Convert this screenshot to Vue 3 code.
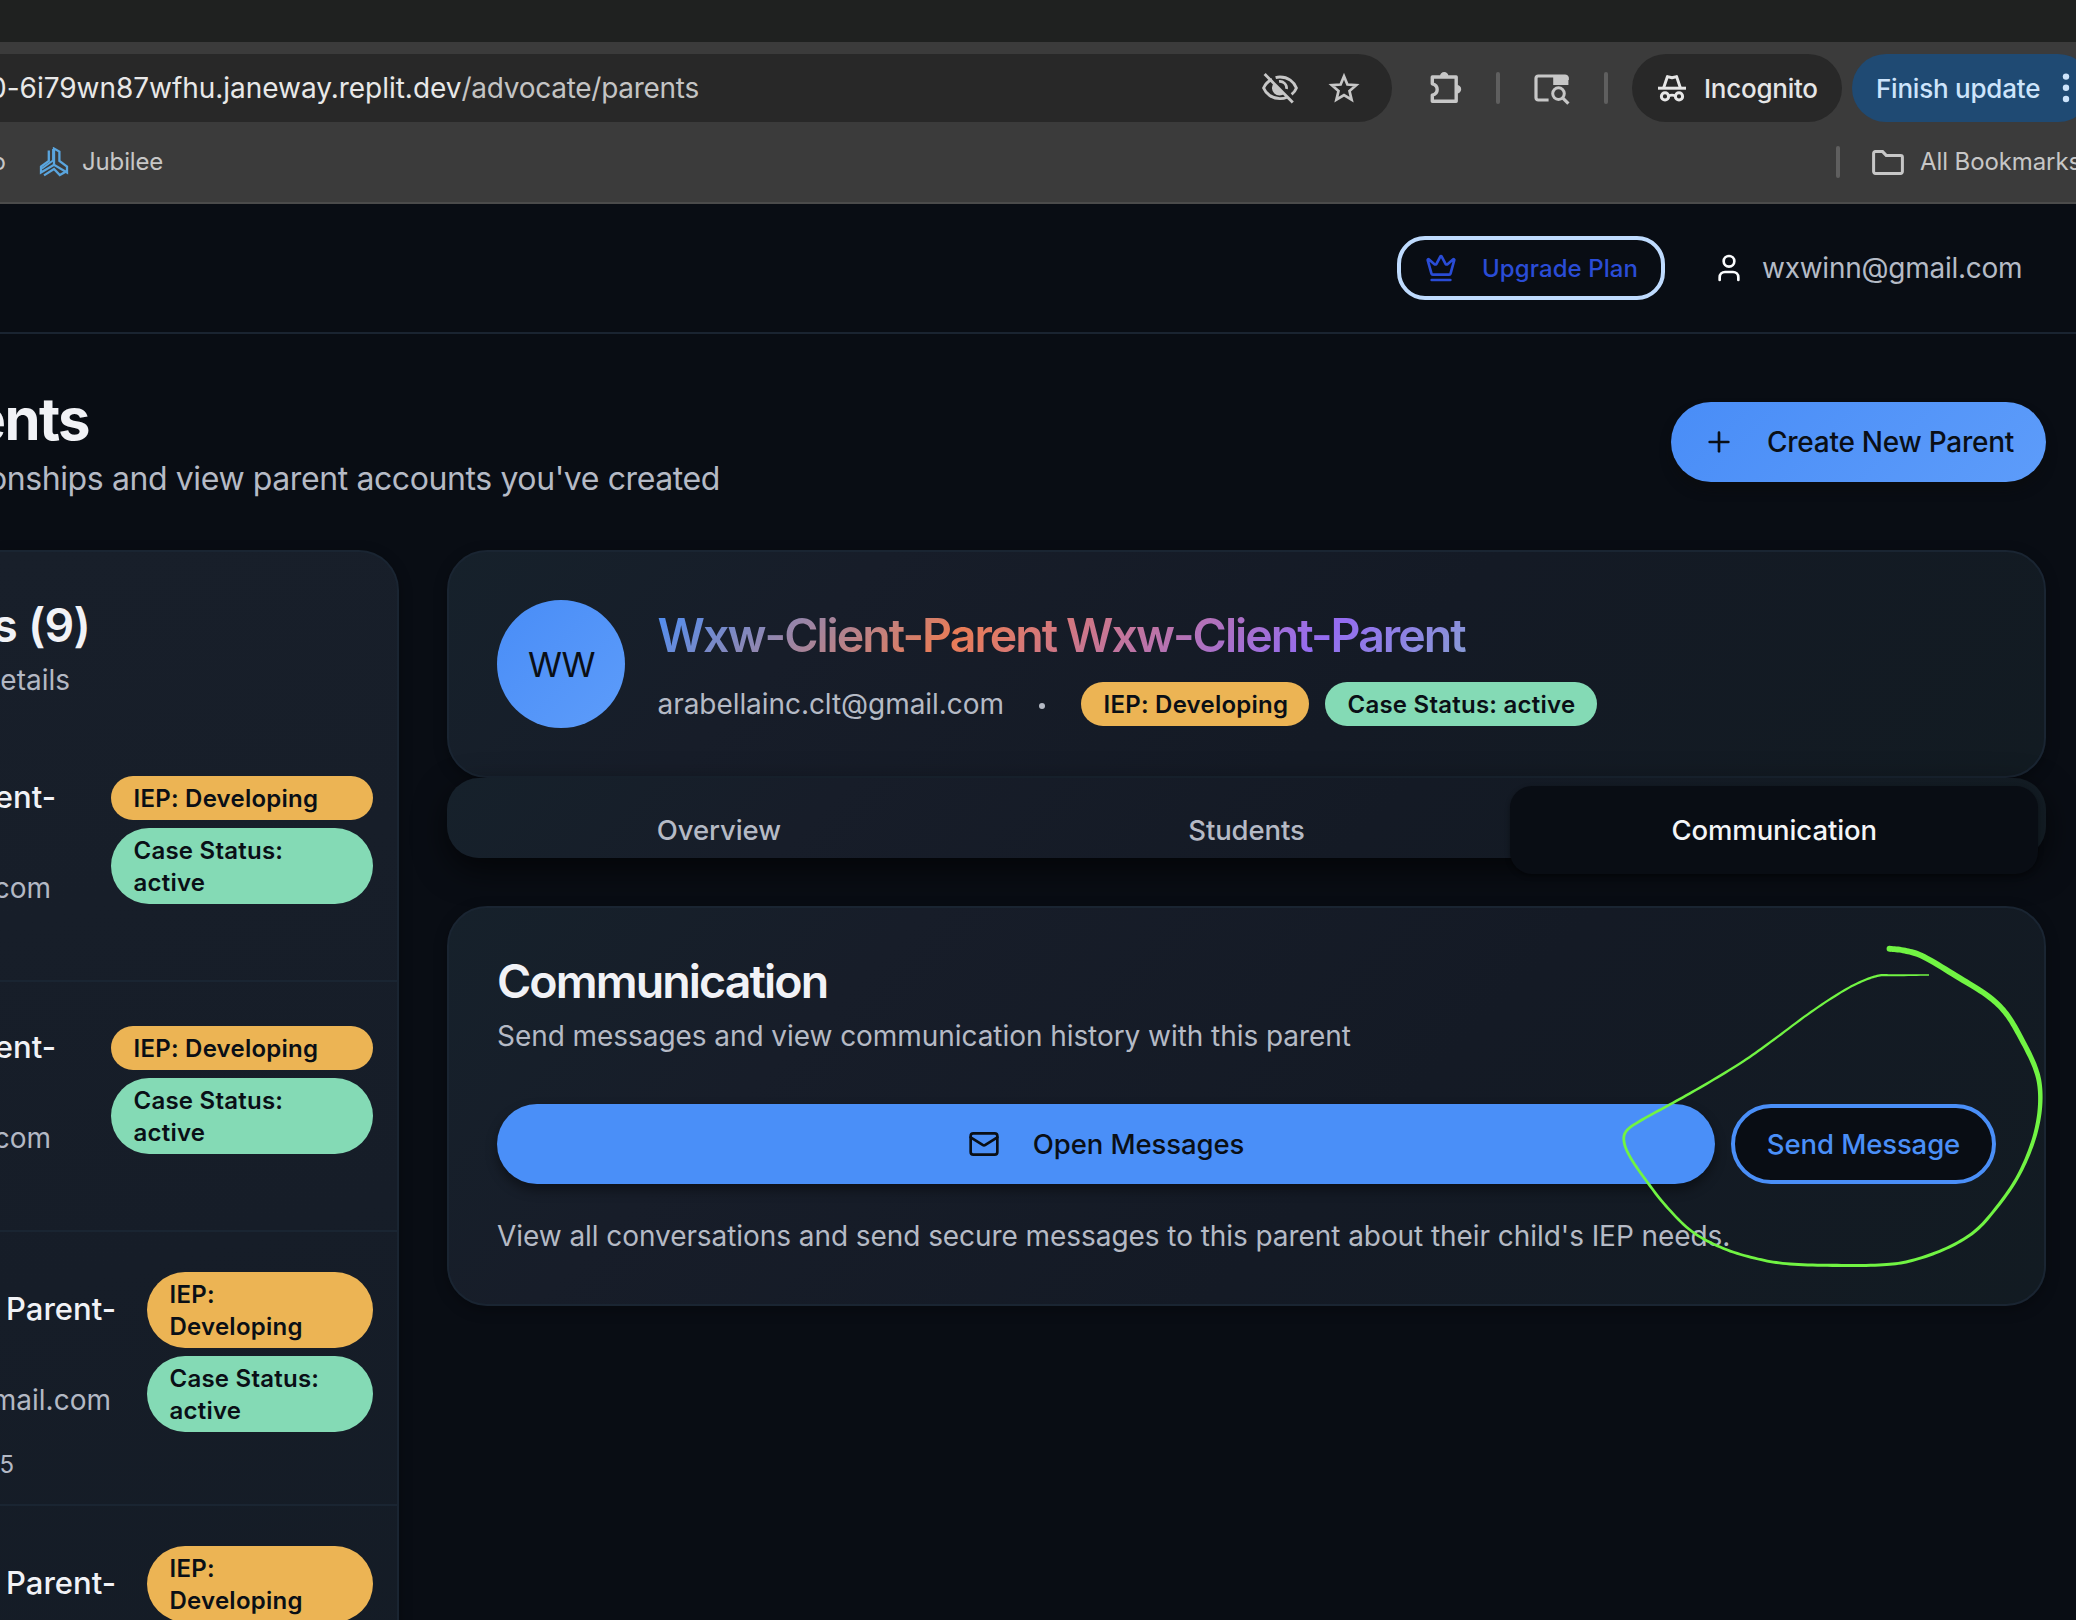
<script setup>
const tabs = [
  { name: 'Overview' },
  { name: 'Students' },
  { name: 'Communication', active: true },
]

const parents = [
  { name: 'Wxw-Client-Parent-', email: 'wxwinn@gmail.com', kind: 'wide' },
  { name: 'Wxw-Client-Parent-', email: 'wxwinn@gmail.com', kind: 'wide' },
  { name: 'Client Parent-', email: 'arabella@gmail.com', date: 'Joined 8/12/2025', kind: 'narrow' },
  { name: 'Client Parent-', email: 'arabella@gmail.com', date: 'Joined 8/12/2025', kind: 'narrow' },
]

// Pen stroke of the hand-drawn annotation: x, y, pen width
const pen = [
  [329.5, 48.7, 5.8], [345, 50.7, 5.8], [364, 56.9, 5.8], [400, 78.3, 5.8], [428, 96, 5.6],
  [446.5, 114, 5.4], [462, 140, 5.2], [475, 167, 5], [480, 189, 4.6], [479, 216, 4.2],
  [471.5, 246, 3.8], [456.5, 279, 3.4], [435, 309.5, 3.1], [414, 332, 3.1], [386, 348.5, 3],
  [352, 360.5, 3], [323, 364.8, 3], [277, 365.4, 3.1], [230, 364, 2.9], [198, 359, 2.8],
  [163.5, 348.5, 2.7], [132, 331.5, 2.7], [106, 306, 2.7], [86.5, 281, 2.7], [71, 258.5, 2.7],
  [64.3, 243, 2.8], [66, 231.5, 2.8], [80, 221, 2.7], [113, 202.8, 2.6], [146.5, 183.8, 2.5],
  [183, 161.5, 2.4], [214, 139.5, 2.3], [251, 112, 2.2], [284, 90.5, 2.2], [305, 80, 2.3],
  [320, 75.4, 2.3], [334, 75.3, 2.1], [369, 74.9, 1.5],
]

function spline(a, b, c, d, t) {
  return 0.5 * (2 * b + (c - a) * t + (2 * a - 5 * b + 4 * c - d) * t * t + (3 * b - a - 3 * c + d) * t * t * t)
}

function brush(points) {
  const pts = []
  for (let i = 0; i < points.length - 1; i++) {
    const p = [points[Math.max(i - 1, 0)], points[i], points[i + 1], points[Math.min(i + 2, points.length - 1)]]
    for (let s = 0; s < 10; s++) {
      const t = s / 10
      pts.push([
        spline(p[0][0], p[1][0], p[2][0], p[3][0], t),
        spline(p[0][1], p[1][1], p[2][1], p[3][1], t),
        p[1][2] + (p[2][2] - p[1][2]) * t,
      ])
    }
  }
  pts.push(points[points.length - 1])
  const left = []
  const right = []
  pts.forEach((p, i) => {
    const a = pts[Math.max(i - 1, 0)]
    const b = pts[Math.min(i + 1, pts.length - 1)]
    const len = Math.hypot(b[0] - a[0], b[1] - a[1]) || 1
    const nx = (-(b[1] - a[1]) / len) * (p[2] / 2)
    const ny = ((b[0] - a[0]) / len) * (p[2] / 2)
    left.push(`${(p[0] + nx).toFixed(2)} ${(p[1] + ny).toFixed(2)}`)
    right.unshift(`${(p[0] - nx).toFixed(2)} ${(p[1] - ny).toFixed(2)}`)
  })
  return `M${left.concat(right).join('L')}Z`
}

const stroke = brush(pen)
</script>

<template>
  <div class="screen">
    <div class="tabstrip"></div>
    <div class="toolbar">
      <div class="omnibox">
        <div class="url">
          <span>0-6i79wn87wfhu.janeway.replit.dev</span><span class="path">/advocate/parents</span>
        </div>
        <div class="omni-icons">
          <svg width="40" height="40" viewBox="0 0 40 40" fill="none">
            <path d="M12 11.4C7.5 13.6 4.8 17.2 3.6 20C6 26 12 30.6 20 30.6C22.8 30.6 25 30.1 27 29.2" stroke="#c7c7c7" stroke-width="2.9" />
            <path d="M15.6 9.6C17 9.2 18.5 9 20 9C28 9 34 13.8 36.4 20C35.5 22.4 34 24.6 31.6 26.4" stroke="#c7c7c7" stroke-width="2.9" />
            <path d="M13.6 15.2A7.6 7.6 0 0 0 24.6 25.6Z" fill="#c7c7c7" />
            <path d="M19 13.4A6.8 6.8 0 0 1 26.6 21" stroke="#c7c7c7" stroke-width="2.6" />
            <path d="M4.6 6L32.8 34.6" stroke="#c7c7c7" stroke-width="2.9" />
          </svg>
          <svg width="32" height="32" viewBox="0 0 32 32" fill="none" stroke="#c7c7c7" stroke-width="2.7">
            <path d="M16 4.2L19.4 12.5L28.2 13.2L21.5 19L23.6 27.6L16 23L8.4 27.6L10.5 19L3.8 13.2L12.6 12.5Z" />
          </svg>
        </div>
      </div>
      <svg class="puzzle" width="34" height="34" viewBox="0 0 34 34">
        <path d="M3.3 6H27.2V30.3H3.3V24.2C9.8 22.6 9.8 14.4 3.3 12.8Z" fill="none" stroke="#c7c7c7" stroke-width="3.4" stroke-linejoin="round" />
        <path d="M11 5.2a4.2 4.2 0 0 1 8.4 0ZM28 14a4.2 4.2 0 0 1 0 8.4Z" fill="#c7c7c7" />
      </svg>
      <i class="sep sep-a"></i>
      <svg class="tabsearch" width="38" height="34" viewBox="0 0 38 34" fill="none" stroke="#c7c7c7">
        <path d="M15.6 29H5.2a2.2 2.2 0 0 1-2.2-2.2V7.2A2.2 2.2 0 0 1 5.2 5H32a2.2 2.2 0 0 1 2.2 2.2V9" stroke-width="3.2" />
        <path d="M20.2 4.6H33.4a2 2 0 0 1 2 2V14H20.2Z" fill="#c7c7c7" stroke="none" />
        <circle cx="25.5" cy="22.6" r="5.8" stroke-width="3" />
        <path d="M29.6 26.8L35.4 32.6" stroke-width="3.2" />
      </svg>
      <i class="sep sep-b"></i>
      <div class="incognito">
        <svg width="30" height="30" viewBox="0 0 30 30" fill="none" stroke="#e6e6e6">
          <path d="M1 15.2H29" stroke-width="3" />
          <path d="M6.8 14.4L10.4 3.6L15 4.8L19.6 3.6L23.2 14.4" stroke-width="3" stroke-linejoin="round" />
          <circle cx="8" cy="23.4" r="3.6" stroke-width="3" />
          <circle cx="22" cy="23.4" r="3.6" stroke-width="3" />
          <path d="M11.4 23Q15 21.4 18.6 23" stroke-width="2.8" />
        </svg>
        <span>Incognito</span>
      </div>
      <div class="update">
        <span>Finish update</span>
        <svg width="8" height="32" viewBox="0 0 8 32" fill="#cde4fb">
          <circle cx="4" cy="4.6" r="3.2" /><circle cx="4" cy="15.8" r="3.2" /><circle cx="4" cy="27" r="3.2" />
        </svg>
      </div>
    </div>
    <div class="bookmarks">
      <span class="bm-cut">o</span>
      <svg class="jubilee" width="30" height="30" viewBox="0 0 30 30" fill="none" stroke="#5aa5de" stroke-width="2.3">
        <path d="M9.8 3.6V14L2 19.6V25.4L15 17.8L28 25.4V19.6L20.4 14V4.6L15 1.6V17.6" />
        <path d="M14 2V13.6L3 21.4" stroke-width="1.8" />
        <path d="M5 28.4L15 22L20.8 28L28 24" />
      </svg>
      <span class="bm">Jubilee</span>
      <i class="sep sep-c"></i>
      <svg class="folder" width="34" height="28" viewBox="0 0 34 28">
        <path d="M2.6 4.4A1.8 1.8 0 0 1 4.4 2.6H11.6L15.2 6.4H29.6A1.8 1.8 0 0 1 31.4 8.2V22.6A1.8 1.8 0 0 1 29.6 24.4H4.4A1.8 1.8 0 0 1 2.6 22.6Z" fill="none" stroke="#c7c7c7" stroke-width="3" />
      </svg>
      <span class="bm all">All Bookmarks</span>
    </div>

    <header class="topbar">
      <button class="upgrade">
        <svg class="lucide" viewBox="0 0 24 24">
          <path d="M11.562 3.266a.5.5 0 0 1 .876 0L15.39 8.87a1 1 0 0 0 1.516.294L21.183 5.5a.5.5 0 0 1 .798.519l-2.834 10.246a1 1 0 0 1-.956.734H5.81a1 1 0 0 1-.957-.734L2.02 6.02a.5.5 0 0 1 .798-.519l4.276 3.664a1 1 0 0 0 1.516-.294z" />
          <path d="M5 21h14" />
        </svg>
        <span>Upgrade Plan</span>
      </button>
      <div class="user">
        <svg class="lucide" viewBox="0 0 24 24">
          <path d="M19 21v-2a4 4 0 0 0-4-4H9a4 4 0 0 0-4 4v2" />
          <circle cx="12" cy="7" r="4" />
        </svg>
        <span>wxwinn@gmail.com</span>
      </div>
    </header>

    <section class="heading">
      <div class="heading-text">
        <h1><span>ents</span></h1>
        <p><span>onships and view parent accounts you've created</span></p>
      </div>
      <button class="create">
        <svg class="lucide" viewBox="0 0 24 24"><path d="M5 12h14" /><path d="M12 5v14" /></svg>
        <span>Create New Parent</span>
      </button>
    </section>

    <main class="columns">
      <aside class="card list">
        <div class="list-head">
          <h2><span>Parents (9)</span></h2>
          <p><span>Select a parent to view details</span></p>
        </div>
        <div v-for="(p, i) in parents" :key="i" class="row" :class="p.kind">
          <div class="who">
            <div class="name"><span>{{ p.name }}</span></div>
            <div class="mail"><span>{{ p.email }}</span></div>
            <div v-if="p.date" class="date"><span>{{ p.date }}</span></div>
          </div>
          <div class="badges">
            <div class="badge amber">IEP: Developing</div>
            <div class="badge green">Case Status: active</div>
          </div>
        </div>
      </aside>

      <div class="detail">
        <section class="card profile">
          <div class="avatar">WW</div>
          <div class="info">
            <h2>Wxw-Client-Parent Wxw-Client-Parent</h2>
            <div class="meta">
              <span class="email">arabellainc.clt@gmail.com</span>
              <span class="dot"></span>
              <span class="badge amber">IEP: Developing</span>
              <span class="badge green">Case Status: active</span>
            </div>
          </div>
        </section>
        <nav class="tabs">
          <div v-for="t in tabs" :key="t.name" class="tab" :class="{ active: t.active }">{{ t.name }}</div>
        </nav>
        <section class="card comm">
          <h2>Communication</h2>
          <p class="sub">Send messages and view communication history with this parent</p>
          <div class="actions">
            <button class="open">
              <svg class="lucide" viewBox="0 0 24 24">
                <rect width="20" height="16" x="2" y="4" rx="2" />
                <path d="m22 7-8.97 5.7a1.94 1.94 0 0 1-2.06 0L2 7" />
              </svg>
              <span>Open Messages</span>
            </button>
            <button class="send">Send Message</button>
          </div>
          <p class="note">View all conversations and send secure messages to this parent about their child's IEP needs.</p>
          <svg class="scribble" width="516" height="440" viewBox="0 0 516 440" fill="#71f443">
            <circle cx="329.5" cy="48.7" r="2.9" />
            <path :d="stroke" />
          </svg>
        </section>
      </div>
    </main>
  </div>
</template>

<style>
body { background: #090d14; }
</style>

<style scoped>
* { box-sizing: border-box; margin: 0; padding: 0; }
.screen {
  width: 2076px; height: 1620px; overflow: hidden; display: flex; flex-direction: column;
  background: #090d14; color: #f1f2f6; font-family: Inter, "Liberation Sans", sans-serif; font-size: 28px;
}
svg { display: block; flex: none; }
button { border: 0; font: inherit; flex: none; }
.lucide { width: 32px; height: 32px; fill: none; stroke: currentColor; stroke-width: 2; stroke-linecap: round; stroke-linejoin: round; }

.tabstrip { height: 42px; background: #1f2120; flex: none; }
.toolbar { height: 92px; flex: none; background: #3b3b3b; display: flex; align-items: center; overflow: hidden; }
.toolbar > * { flex: none; }
.omnibox { width: 1392px; height: 68px; border-radius: 0 34px 34px 0; background: #282828; display: flex; align-items: center; justify-content: space-between; }
.url { width: 699px; display: flex; justify-content: flex-end; white-space: nowrap; color: #e8e8e8; letter-spacing: -0.03px; }
.path { color: #c4c4c4; letter-spacing: -0.27px; }
.omni-icons { display: flex; align-items: center; gap: 28px; padding-right: 32px; }
.puzzle { margin-left: 37px; }
.sep { width: 4px; height: 32px; border-radius: 2px; background: #5f5f5f; flex: none; }
.sep-a { margin-left: 33px; }
.tabsearch { margin-left: 33px; }
.sep-b { margin-left: 33px; }
.incognito { margin-left: 24px; width: 210px; height: 68px; border-radius: 34px; background: #282828; color: #e6e6e6; display: flex; align-items: center; padding-left: 25px; gap: 17px; font-size: 26px; font-weight: 500; letter-spacing: -0.25px; }
.update { margin-left: 10px; width: 240px; height: 68px; border-radius: 34px; background: #1f4a73; color: #cde4fb; display: flex; align-items: center; padding-left: 24px; font-size: 26px; font-weight: 500; letter-spacing: -0.22px; }
.update svg { margin-left: 22px; }
.update span { width: 164px; white-space: nowrap; }

.bookmarks { height: 70px; flex: none; background: #3b3b3b; border-bottom: 2px solid #4b4b4b; display: flex; align-items: flex-start; padding-top: 8px; color: #c7c7c7; font-size: 24px; }
.bm-cut { width: 6px; line-height: 40px; display: flex; justify-content: flex-end; overflow: hidden; flex: none; }
.jubilee { margin: 5px 0 0 33px; }
.bm { line-height: 40px; margin-left: 13px; white-space: nowrap; flex: none; letter-spacing: -0.15px; }
.bookmarks .bm { width: 82px; }
.sep-c { margin: 4px 0 0 1672px; }
.folder { margin: 7px 0 0 31px; }
.bookmarks .all { width: 170px; margin-left: 15px; letter-spacing: -0.1px; }

.topbar { height: 130px; flex: none; border-bottom: 2px solid #1a2431; display: flex; align-items: center; justify-content: flex-end; padding-right: 54px; }
.upgrade { width: 268px; height: 64px; border: 4px solid #bfdbfe; border-radius: 28px; background: transparent; color: #2a4cd6; display: flex; align-items: center; padding-left: 24px; gap: 25px; font-size: 24px; font-weight: 500; letter-spacing: 0.08px; white-space: nowrap; }
.user { display: flex; align-items: center; gap: 17px; margin-left: 48px; color: #b5bbc6; width: 309px; letter-spacing: -0.25px; }
.user svg { color: #fbfcfe; }

.heading { height: 120px; margin: 48px 30px 48px 0; flex: none; display: flex; justify-content: space-between; align-items: center; }
.heading-text { width: 720px; }
h1 { width: 89px; height: 72px; line-height: 74px; font-size: 58px; font-weight: 700; letter-spacing: -1.6px; color: #f1f2f6; display: flex; justify-content: flex-end; white-space: nowrap; }
.heading-text p { height: 48px; line-height: 50px; font-size: 32px; letter-spacing: -0.4px; color: #b5bac5; display: flex; justify-content: flex-end; white-space: nowrap; }
.create { width: 375px; height: 80px; border-radius: 40px; background: linear-gradient(135deg, #498df7, #5d9cfa); color: #0a0f16; display: flex; align-items: center; gap: 32px; padding-left: 32px; font-weight: 500; letter-spacing: -0.25px; white-space: nowrap; box-shadow: 0 8px 14px -4px #0b0c0d; }

.columns { display: flex; gap: 48px; height: 1070px; flex: none; align-items: flex-start; }
.card { border: 2px solid #1a2532; border-radius: 40px; background: linear-gradient(135deg, #16212b 0%, #171d29 24%, #141a25 58%, #121b22 100%); box-shadow: 0 4px 14px rgba(0, 0, 0, 0.3); }
h2 { font-size: 46.5px; font-weight: 600; letter-spacing: -1.9px; line-height: 50px; height: 48px; white-space: nowrap; }

.list { width: 399px; height: 1400px; flex: none; border-left: 0; border-radius: 0 40px 40px 0; background: linear-gradient(165deg, #181f2a 0%, #161d28 50%, #131b24 100%); padding-top: 48px; }
.list-head { height: 132px; }
.list-head h2 { width: 90px; display: flex; justify-content: flex-end; letter-spacing: -0.8px; }
.list-head p { width: 70px; margin-top: 12px; line-height: 40px; color: #b3b8c4; display: flex; justify-content: flex-end; white-space: nowrap; }
.row { border-bottom: 2px solid #1a2532; display: flex; justify-content: space-between; padding-right: 24px; align-items: flex-start; }
.wide { height: 250px; padding-top: 44px; }
.narrow { height: 274px; padding-top: 40px; }
.who { white-space: nowrap; flex: none; }
.who div { display: flex; justify-content: flex-end; }
.wide .who { width: 56px; margin-top: -4px; }
.narrow .who { width: 116px; margin-top: 12px; }
.name { font-size: 31px; font-weight: 500; height: 48px; line-height: 50px; }
.mail { margin-top: 48px; line-height: 40px; color: #b3b8c4; }
.wide .mail { width: 51px; }
.narrow .mail { width: 111px; }
.date { width: 14px; margin-top: 29px; font-size: 24px; line-height: 32px; color: #b3b8c4; }
.badges { display: flex; flex-direction: column; gap: 8px; flex: none; }
.wide .badges { width: 262px; }
.narrow .badges { width: 226px; }
.badge { padding: 7px 21px 5px 22.5px; border-radius: 38px; font-size: 24px; line-height: 32px; font-weight: 600; letter-spacing: 0.24px; color: #0a0f16; }
.wide .green, .narrow .badge { padding-right: 50px; }
.amber { background: #ecb454; }
.green { background: #84dab5; }

.detail { width: 1599px; flex: none; display: flex; flex-direction: column; }
.profile { height: 228px; padding: 48px; display: flex; gap: 32.5px; align-items: center; }
.avatar { width: 128px; height: 128px; border-radius: 50%; background: linear-gradient(135deg, #498df7, #5d9cfa); color: #0a0f16; font-size: 34.5px; letter-spacing: -1.5px; display: flex; align-items: center; justify-content: center; flex: none; }
.info { display: flex; flex-direction: column; gap: 16px; }
.info h2 { height: 64px; line-height: 66px; letter-spacing: -1.98px; background: linear-gradient(135deg, #4a8ff8 0%, #e97c56 33%, #946cf0 70%, #7cc4bd 100%); -webkit-background-clip: text; background-clip: text; color: transparent; }
.meta { display: flex; align-items: center; white-space: nowrap; }
.email { width: 345.5px; letter-spacing: -0.06px; color: #b5bac5; }
.dot { width: 6px; height: 6px; border-radius: 50%; background: #b5bac5; margin: 3px 36px 0; }
.meta .amber { width: 228px; }
.meta .green { width: 272px; margin-left: 16px; }

.tabs { height: 80px; border-radius: 32px; background: linear-gradient(135deg, #16212b 0%, #171d29 24%, #141a25 58%, #121b22 100%); padding: 8px; display: flex; align-items: flex-start; box-shadow: 0 12px 32px rgba(0, 0, 0, 0.62); }
.tab { flex: 1; height: 88px; line-height: 88px; text-align: center; border-radius: 22px; font-size: 27.5px; font-weight: 500; letter-spacing: -0.1px; color: #b5bac5; }
.tab.active { background: #090d14; color: #f4f5f8; box-shadow: 0 2px 5px rgba(0, 0, 0, 0.4); }

.comm { margin-top: 48px; height: 400px; padding: 48px 48px 0; position: relative; }
.sub { margin-top: 12px; line-height: 40px; letter-spacing: -0.06px; color: #b5bac5; white-space: nowrap; }
.actions { margin-top: 48px; display: flex; gap: 16px; }
.open { width: 1218px; height: 80px; border-radius: 40px; background: #4a8ff8; color: #0a0f16; display: flex; align-items: center; justify-content: center; gap: 33px; font-size: 27.5px; font-weight: 500; letter-spacing: -0.08px; box-shadow: 0 6px 12px rgba(0, 0, 0, 0.4); }
.send { width: 265px; height: 80px; border-radius: 40px; border: 4px solid #4a8ff8; background: #090d14; color: #4a8ff8; font-size: 27.5px; font-weight: 500; letter-spacing: -0.1px; }
.note { margin-top: 32px; line-height: 40px; letter-spacing: -0.065px; color: #b5bac5; white-space: nowrap; }
.scribble { position: absolute; left: 1111px; top: -8px; pointer-events: none; }
</style>
